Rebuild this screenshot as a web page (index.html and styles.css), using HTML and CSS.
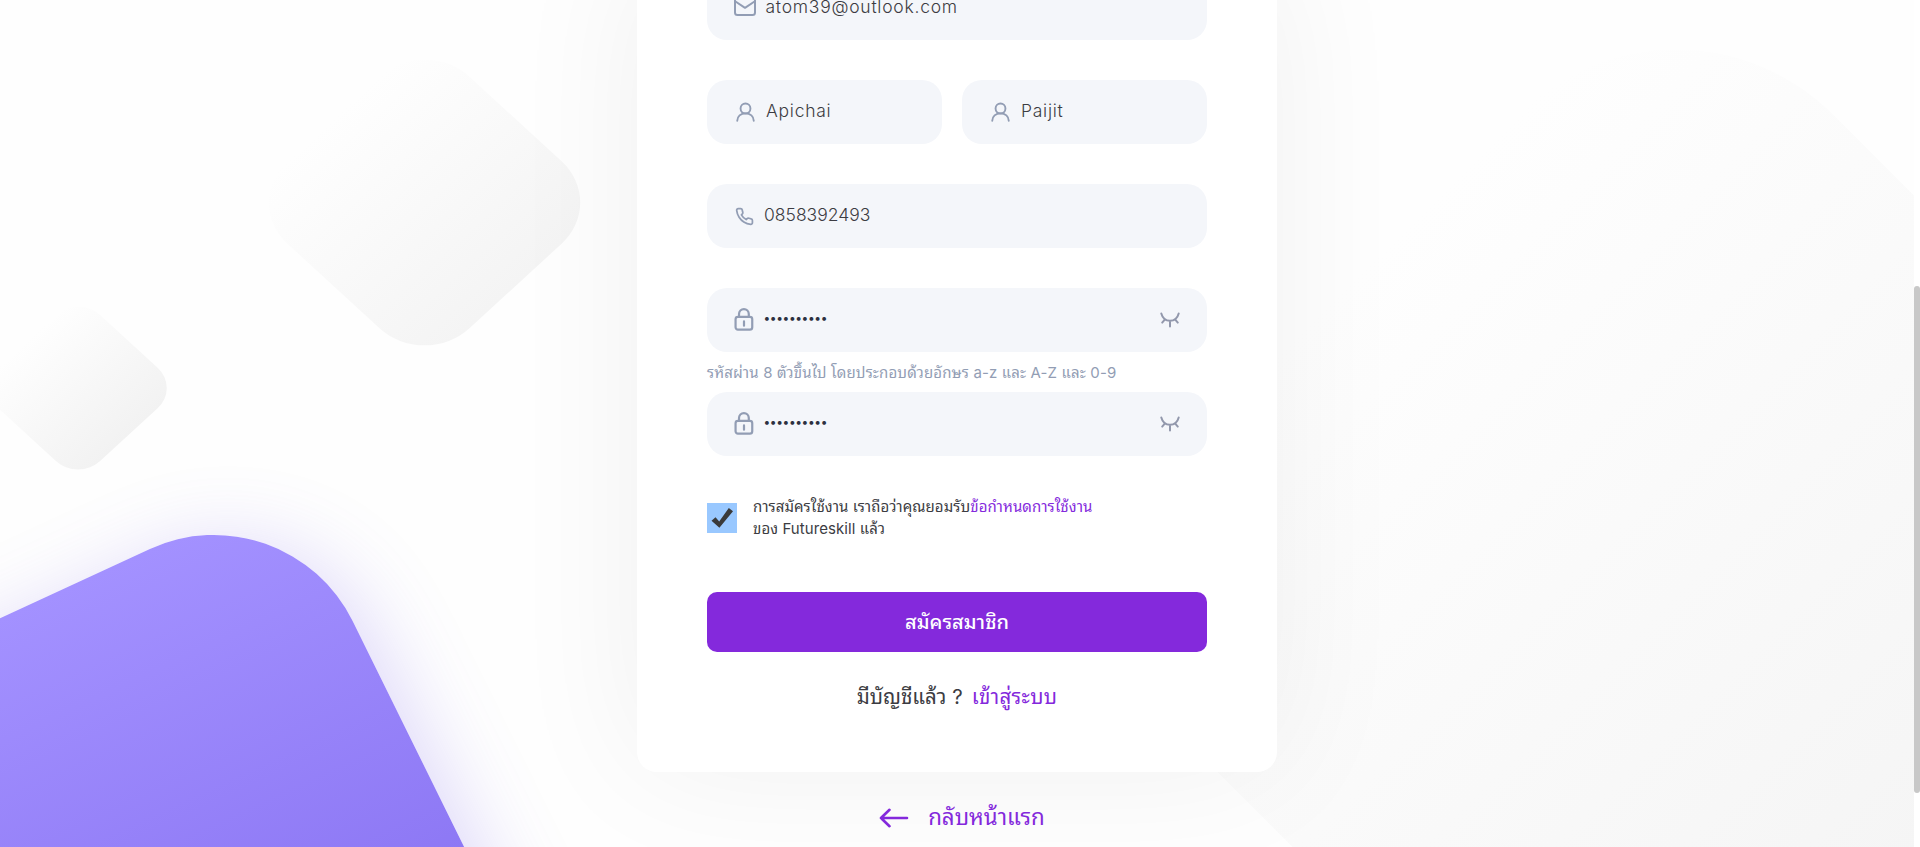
FILE: index.html
```html
<!DOCTYPE html>
<html lang="th">
<head>
<meta charset="utf-8">
<title>Futureskill</title>
<link rel="stylesheet" href="styles.css">
</head>
<body>
<svg class="defs" width="0" height="0">
  <symbol id="user" viewBox="0 0 20 20"><circle cx="10" cy="6.3" r="5.2"/><path d="M1.300 19.300C1.300 14.600 5 11.400 10 11.400s8.700 3.200 8.700 7.900"/></symbol>
  <symbol id="lock" viewBox="0 0 20 24"><rect x="1.200" y="9.300" width="17.400" height="13.200" rx="2.500"/><path d="M4.800 9V6.300a5.100 5.100 0 0 1 10.200 0V9M10 14v4.400"/></symbol>
  <symbol id="eye" viewBox="0 0 20 16"><path d="M1.300 1.500C2.500 6 5.700 8.800 10 8.800S17.500 6 18.700 1.500M5 7.400L2.200 10.600M15 7.400l2.800 3.200M10 8.800v5.700"/></symbol>
</svg>
<div class="page">
  <div class="shape shape-right"></div>
  <div class="shape shape-mid"></div>
  <div class="shape shape-small"></div>
  <div class="shape shape-purple"></div>

  <main class="content">
    <form class="card">
      <div class="field email">
        <svg class="icon mail" viewBox="0 0 22 20"><rect x="1" y="1" width="20" height="18" rx="2.500"/><path d="M1.500 5.500L11 11.800l9.500-6.300"/></svg>
        <span class="value">atom39@outlook.com</span>
      </div>
      <div class="names">
        <div class="field"><svg class="icon user"><use href="#user"/></svg><span class="value first">Apichai</span></div>
        <div class="field"><svg class="icon user"><use href="#user"/></svg><span class="value last">Paijit</span></div>
      </div>
      <div class="field phone">
        <svg class="icon tel" viewBox="0 0 24 24"><path d="M22 16.920v3a2 2 0 0 1-2.180 2 19.790 19.790 0 0 1-8.630-3.070 19.500 19.500 0 0 1-6-6 19.790 19.790 0 0 1-3.070-8.670A2 2 0 0 1 4.110 2h3a2 2 0 0 1 2 1.720c.127.960.361 1.903.7 2.810a2 2 0 0 1-.45 2.110L8.090 9.910a16 16 0 0 0 6 6l1.270-1.270a2 2 0 0 1 2.110-.45c.907.339 1.850.573 2.810.7A2 2 0 0 1 22 16.920z"/></svg>
        <span class="value number">0858392493</span>
      </div>
      <div class="field password">
        <svg class="icon lock"><use href="#lock"/></svg><span class="value dots">••••••••••</span><svg class="icon eye"><use href="#eye"/></svg>
      </div>
      <p class="hint">รหัสผ่าน 8 ตัวขึ้นไป โดยประกอบด้วยอักษร a-z และ A-Z และ 0-9</p>
      <div class="field">
        <svg class="icon lock"><use href="#lock"/></svg><span class="value dots">••••••••••</span><svg class="icon eye"><use href="#eye"/></svg>
      </div>
      <div class="terms">
        <span class="check"><svg viewBox="0 0 30 30"><path d="M4.500 17.800l4-3.500 3.700 4.200L21.800 5l4.200 3.200-13.600 16.600z"/></svg></span>
        <p class="terms-text"><span class="t1">การสมัครใช้งาน เราถือว่าคุณยอมรับ</span><a class="t2">ข้อกำหนดการใช้งาน</a><br><span class="t3">ของ Futureskill แล้ว</span></p>
      </div>
      <div class="submit"><span>สมัครสมาชิก</span></div>
      <p class="login"><span class="ask">มีบัญชีแล้ว ?</span><a class="enter">เข้าสู่ระบบ</a></p>
    </form>
    <a class="back"><svg viewBox="0 0 30 20"><path d="M28 10H2M10.500 1.800L2 10l8.500 8.200"/></svg><span>กลับหน้าแรก</span></a>
  </main>
</div>
<div class="scrollbar"><div class="thumb"></div></div>
</body>
</html>
```
FILE: styles.css
```css
* { box-sizing: border-box; }
body { margin: 0; height: 847px; display: flex; overflow: hidden; background: #fff; font-family: Inter, "Noto Sans Thai Looped", Loma, Garuda, Waree, Umpush, Sarabun, "Noto Serif Thai", sans-serif; color: #3c3c42; }
p { margin: 0; }
.defs { position: absolute; }
.page { position: relative; width: 1914px; height: 847px; overflow: hidden; background: #fefefe; }
.scrollbar { width: 6px; height: 847px; padding-top: 286px; background: #fff; }
.thumb { height: 507px; border-radius: 3px; background: #c8c8c8; }

/* decorative shapes on the canvas */
.shape { position: absolute; }
.shape-right { left: 1226px; top: 144px; width: 900px; height: 900px; border-radius: 222px; transform: rotate(45deg); background: linear-gradient(90deg, #fefefe, #f4f4f4); }
.shape-mid { left: 301px; top: 79px; width: 247px; height: 247px; border-radius: 61px; transform: matrix(.737, .676, -.737, .676, 0, 0); background: linear-gradient(90deg, #fefefe, #f4f4f4); }
.shape-small { left: 9px; top: 319px; width: 138px; height: 138px; border-radius: 30px; transform: matrix(.737, .676, -.737, .676, 0, 0); background: linear-gradient(90deg, #fefefe, #f2f2f2); }
.shape-purple { left: -414px; top: 486px; width: 700px; height: 700px; border-radius: 150px; transform-origin: 100% 0; transform: matrix(.9076, -.4198, .4425, .8968, 0, 0); background: linear-gradient(180deg, #a391ff 0, #8872f2 500px, #806aee); box-shadow: 8px 16px 80px rgba(120, 95, 235, .25); }

.content { position: relative; display: flex; flex-direction: column; align-items: center; }
.card { width: 640px; height: 812px; margin-top: -40px; padding: 16px 70px 0; border-radius: 20px; background: #fff; box-shadow: 0 -6px 140px rgba(0, 0, 0, .058); display: flex; flex-direction: column; }
.field { display: flex; align-items: center; flex: none; height: 64px; padding: 0 26px; border-radius: 20px; background: #f4f6fa; }
.names { display: grid; grid-template-columns: 235px 245px; gap: 20px; margin: 40px 0; }
.names .field { padding-left: 29px; }
.phone { margin-bottom: 40px; }
.icon { flex: none; fill: none; stroke: #929db4; stroke-width: 2; stroke-linecap: round; stroke-linejoin: round; }
.mail { width: 22px; height: 20px; margin: -4px 9.500px 0 1px; }
.user { width: 19px; height: 20px; margin-right: 11px; }
.tel { width: 19px; height: 19px; margin: 0 10px 0 2px; stroke-width: 2.200; }
.lock { width: 20px; height: 23px; margin: -1px 10px 0 .5px; stroke-width: 2.300; }
.eye { width: 20px; height: 16px; margin: -1px 1px 0 auto; stroke: #9298ac; }
.value { font-size: 17.500px; font-weight: 300; line-height: 24px; margin-top: -3px; white-space: nowrap; letter-spacing: .75px; }
.number { letter-spacing: 0; }
.dots { font-size: 12px; color: #2c3040; font-weight: 400; margin-top: -4px; letter-spacing: -.4px; }
.hint { height: 40px; line-height: 42px; font-size: 15px; letter-spacing: .14px; color: #929db4; white-space: nowrap; }
.terms { display: flex; gap: 16px; height: 60px; margin-top: 32px; align-items: center; }
.check { width: 30px; height: 30px; background: #99c8ff; }
.check svg { display: block; fill: #3a3a3a; }
.terms-text { font-size: 15px; line-height: 22px; white-space: nowrap; letter-spacing: .08px; }
.t2, .enter, .back { color: #8429dc; }
.submit { flex: none; height: 60px; margin-top: 44px; border-radius: 10px; background: #8429dc; color: #fff; font-size: 20px; font-weight: 500; line-height: 60px; text-align: center; }
.login { display: flex; justify-content: center; gap: 9px; margin-top: 30px; font-size: 20.500px; line-height: 30px; font-weight: 400; white-space: nowrap; }
.enter { letter-spacing: .3px; }
.back { display: flex; align-items: center; gap: 19px; height: 40px; margin: 26px 0 0 10px; font-size: 22.300px; line-height: 40px; font-weight: 400; white-space: nowrap; }
.back span { margin-top: -2px; }
.back svg { width: 30px; height: 20px; fill: none; stroke: #8429dc; stroke-width: 2.600; stroke-linecap: round; stroke-linejoin: round; }
```
